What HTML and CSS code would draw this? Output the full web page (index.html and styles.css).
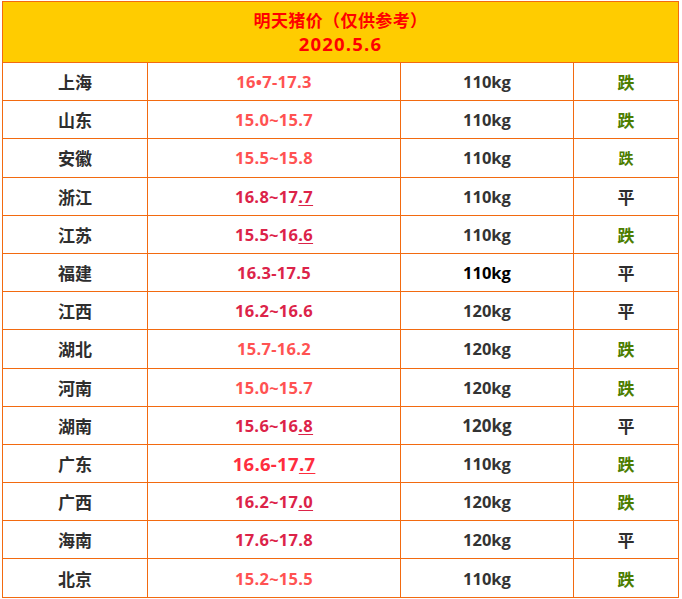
FILE: index.html
```html
<!DOCTYPE html>
<html lang="zh-CN">
<head>
<meta charset="utf-8">
<title>明天猪价</title>
<link rel="stylesheet" href="styles.css">
</head>
<body>
<table class="price-table">
  <colgroup>
    <col class="c-city"><col class="c-price"><col class="c-weight"><col class="c-trend">
  </colgroup>
  <thead>
    <tr><th colspan="4" class="title"><div class="title-main">明天猪价（仅供参考）</div><div class="title-date">2020.5.6</div></th></tr>
  </thead>
  <tbody>
    <tr><td class="city">上海</td><td class="price p-light">16•7-17.3</td><td class="weight">110kg</td><td class="trend down">跌</td></tr>
    <tr><td class="city">山东</td><td class="price p-light">15.0~15.7</td><td class="weight">110kg</td><td class="trend down">跌</td></tr>
    <tr><td class="city">安徽</td><td class="price p-light">15.5~15.8</td><td class="weight">110kg</td><td class="trend down small">跌</td></tr>
    <tr><td class="city">浙江</td><td class="price p-dark">16.8~17<span class="u">.7</span></td><td class="weight">110kg</td><td class="trend flat">平</td></tr>
    <tr><td class="city">江苏</td><td class="price p-dark">15.5~16<span class="u">.6</span></td><td class="weight">110kg</td><td class="trend down">跌</td></tr>
    <tr><td class="city">福建</td><td class="price p-dark">16.3-17.5</td><td class="weight black">110kg</td><td class="trend flat">平</td></tr>
    <tr><td class="city">江西</td><td class="price p-dark">16.2~16.6</td><td class="weight">120kg</td><td class="trend flat">平</td></tr>
    <tr><td class="city">湖北</td><td class="price p-light">15.7-16.2</td><td class="weight">120kg</td><td class="trend down">跌</td></tr>
    <tr><td class="city">河南</td><td class="price p-light">15.0~15.7</td><td class="weight">120kg</td><td class="trend down">跌</td></tr>
    <tr><td class="city">湖南</td><td class="price p-dark">15.6~16<span class="u">.8</span></td><td class="weight big">120kg</td><td class="trend flat">平</td></tr>
    <tr><td class="city">广东</td><td class="price p-bright big">16.6-17<span class="u">.7</span></td><td class="weight">110kg</td><td class="trend down">跌</td></tr>
    <tr><td class="city">广西</td><td class="price p-dark">16.2~17<span class="u">.0</span></td><td class="weight">120kg</td><td class="trend down">跌</td></tr>
    <tr><td class="city">海南</td><td class="price p-dark">17.6~17.8</td><td class="weight">120kg</td><td class="trend flat">平</td></tr>
    <tr><td class="city">北京</td><td class="price p-light">15.2~15.5</td><td class="weight">110kg</td><td class="trend down">跌</td></tr>
  </tbody>
</table>
</body>
</html>
```

FILE: styles.css
```css
html, body {
  margin: 0;
  padding: 0;
  background: #ffffff;
}

body {
  padding: 1px 0 0 2px;
  font-family: "Open Sans", "Noto Sans CJK SC", sans-serif;
}

.price-table {
  border-collapse: collapse;
  table-layout: fixed;
  width: 676px;
}

.c-city { width: 145px; }
.c-price { width: 253px; }
.c-weight { width: 173px; }
.c-trend { width: 105px; }

.price-table th,
.price-table td {
  border: 1px solid #f26a10;
  text-align: center;
  padding: 0;
  font-weight: 700;
}

.title {
  background: #ffcc00;
  color: #ff0000;
  height: 60px;
  font-family: "Noto Sans CJK SC", sans-serif;
}

.title-main {
  font-size: 17px;
  line-height: 24px;
  letter-spacing: 0.4px;
}

.title-date {
  font-family: "Open Sans", "Noto Sans CJK SC", sans-serif;
  font-size: 18.5px;
  line-height: 24px;
  letter-spacing: 1.2px;
}

.price-table tbody tr {
  height: 38.2px;
}

.city {
  font-family: "Noto Sans CJK SC", sans-serif;
  font-size: 17px;
  color: #2e2e2e;
}

.price {
  font-size: 16.5px;
  letter-spacing: 0.3px;
}

.price.big {
  font-size: 18.5px;
}

.p-light { color: #ff5252; }
.p-dark { color: #dc2349; }
.p-bright { color: #ff2d3e; }

.u {
  text-decoration: underline;
  text-decoration-thickness: 1px;
  text-underline-offset: 2px;
}

.weight {
  font-size: 16.5px;
  color: #333333;
}

.weight.black { color: #000000; }
.weight.big { font-size: 17px; }

.trend {
  font-family: "Noto Sans CJK SC", sans-serif;
  font-size: 17px;
}

.trend.small { font-size: 15px; }

.down { color: #4c7d00; }
.flat { color: #2e2e2e; }
```
